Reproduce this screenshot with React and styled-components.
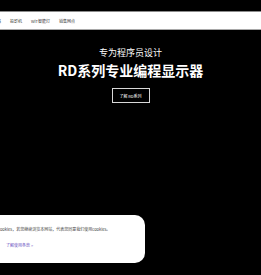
import React from "react";
import styled, { createGlobalStyle } from "styled-components";

const GlobalStyle = createGlobalStyle`
  html, body {
    margin: 0;
    padding: 0;
    background: #000;
    font-family: "Noto Sans CJK SC", "Noto Sans", sans-serif;
  }
`;

const Page = styled.div`
  width: 261px;
  height: 275px;
  background: #000;
  overflow: hidden;
  position: relative;
`;

const TopStrip = styled.div`
  height: 11px;
  background: #000;
`;

const NavBar = styled.nav`
  height: 17px;
  background: #fff;
  border-top: 1px solid #8c8c8c;
  border-bottom: 1px solid #a8a8a8;
  display: flex;
  align-items: center;
`;

const NavList = styled.ul`
  display: flex;
  align-items: center;
  gap: 9px;
  margin: 0 0 0 -11px;
  padding: 0;
  list-style: none;
`;

const NavItem = styled.li`
  font-size: 4px;
  line-height: 6px;
  color: #333;
  white-space: nowrap;
`;

const Hero = styled.section`
  display: flex;
  flex-direction: column;
  align-items: center;
  padding-top: 17px;
  color: #fff;
`;

const Subtitle = styled.h3`
  margin: 0;
  font-size: 9px;
  line-height: 12px;
  font-weight: 400;
`;

const Title = styled.h1`
  margin: 2px 0 0;
  font-size: 14px;
  line-height: 18px;
  font-weight: 700;
`;

const HeroButton = styled.a`
  margin-top: 9px;
  width: 38px;
  height: 15px;
  box-sizing: border-box;
  border: 1px solid #d8d8d8;
  display: flex;
  align-items: center;
  justify-content: center;
  font-size: 4px;
  color: #fff;
  white-space: nowrap;
`;

const CookieBanner = styled.div`
  position: absolute;
  left: -60px;
  top: 215px;
  width: 205px;
  height: 48px;
  background: #fff;
  border-radius: 10px;
  box-sizing: border-box;
  padding: 12px 0 0 66px;
  display: flex;
  flex-direction: column;
  align-items: flex-start;
  gap: 11px;
`;

const CookieText = styled.p`
  margin: 0 0 0 -28px;
  font-size: 4px;
  line-height: 5px;
  color: #444;
  white-space: nowrap;
`;

const CookieLink = styled.a`
  font-size: 4px;
  line-height: 5px;
  color: #6a52c2;
  white-space: nowrap;
`;

export default function App() {
  return (
    <>
      <GlobalStyle />
      <Page>
        <TopStrip />
        <NavBar>
          <NavList>
            <NavItem>显示器</NavItem>
            <NavItem>投影机</NavItem>
            <NavItem>WiT智能灯</NavItem>
            <NavItem>销售网点</NavItem>
          </NavList>
        </NavBar>
        <Hero>
          <Subtitle>专为程序员设计</Subtitle>
          <Title>RD系列专业编程显示器</Title>
          <HeroButton>了解 RD系列</HeroButton>
        </Hero>
        <CookieBanner>
          <CookieText>本网站使用cookies，若您继续浏览本网站，代表您同意我们使用cookies。</CookieText>
          <CookieLink>了解使用条款 &gt;</CookieLink>
        </CookieBanner>
      </Page>
    </>
  );
}
